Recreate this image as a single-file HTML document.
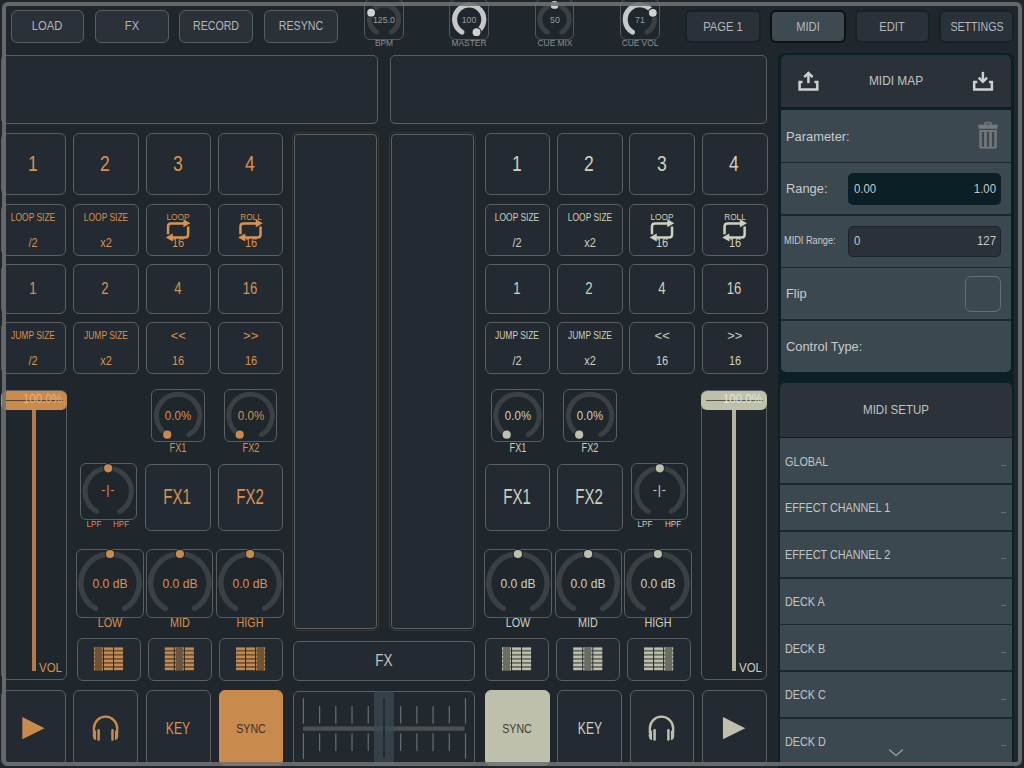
<!DOCTYPE html>
<html><head><meta charset="utf-8"><style>
html,body{margin:0;padding:0;}
body{width:1024px;height:768px;overflow:hidden;background:#1f262c;font-family:"Liberation Sans", sans-serif;position:relative;}
</style></head><body>
<div style="position:absolute;left:10.50px;top:10.20px;width:73.50px;height:32.50px;background:#2a3138;border:1.3px solid #5a5e62;border-radius:6px;box-sizing:border-box;"></div><div style="position:absolute;left:47.25px;top:26.40px;font-size:13.3px;line-height:13.3px;height:13.3px;color:#b5b7b8;white-space:nowrap;transform:translate(-50%,-50%) scaleX(0.84);transform-origin:center center;font-weight:normal;">LOAD</div><div style="position:absolute;left:95.00px;top:10.20px;width:73.50px;height:32.50px;background:#2a3138;border:1.3px solid #5a5e62;border-radius:6px;box-sizing:border-box;"></div><div style="position:absolute;left:131.75px;top:26.40px;font-size:13.3px;line-height:13.3px;height:13.3px;color:#b5b7b8;white-space:nowrap;transform:translate(-50%,-50%) scaleX(0.84);transform-origin:center center;font-weight:normal;">FX</div><div style="position:absolute;left:179.10px;top:10.20px;width:74.40px;height:32.50px;background:#2a3138;border:1.3px solid #5a5e62;border-radius:6px;box-sizing:border-box;"></div><div style="position:absolute;left:216.30px;top:26.40px;font-size:13.3px;line-height:13.3px;height:13.3px;color:#b5b7b8;white-space:nowrap;transform:translate(-50%,-50%) scaleX(0.8);transform-origin:center center;font-weight:normal;">RECORD</div><div style="position:absolute;left:263.50px;top:10.20px;width:74.40px;height:32.50px;background:#2a3138;border:1.3px solid #5a5e62;border-radius:6px;box-sizing:border-box;"></div><div style="position:absolute;left:300.70px;top:26.40px;font-size:13.3px;line-height:13.3px;height:13.3px;color:#b5b7b8;white-space:nowrap;transform:translate(-50%,-50%) scaleX(0.8);transform-origin:center center;font-weight:normal;">RESYNC</div><div style="position:absolute;left:685.30px;top:9.60px;width:75.90px;height:33.80px;background:#2a3138;border:2px solid #14232a;border-radius:6px;box-sizing:border-box;"></div><div style="position:absolute;left:723.25px;top:26.60px;font-size:13.3px;line-height:13.3px;height:13.3px;color:#b5b7b8;white-space:nowrap;transform:translate(-50%,-50%) scaleX(0.84);transform-origin:center center;font-weight:normal;">PAGE 1</div><div style="position:absolute;left:769.80px;top:9.60px;width:76.00px;height:33.80px;background:#3d4a52;border:2px solid #0b1114;border-radius:6px;box-sizing:border-box;"></div><div style="position:absolute;left:807.80px;top:26.60px;font-size:13.3px;line-height:13.3px;height:13.3px;color:#b5b7b8;white-space:nowrap;transform:translate(-50%,-50%) scaleX(0.84);transform-origin:center center;font-weight:normal;">MIDI</div><div style="position:absolute;left:854.50px;top:9.60px;width:75.20px;height:33.80px;background:#2a3138;border:2px solid #14232a;border-radius:6px;box-sizing:border-box;"></div><div style="position:absolute;left:892.10px;top:26.60px;font-size:13.3px;line-height:13.3px;height:13.3px;color:#b5b7b8;white-space:nowrap;transform:translate(-50%,-50%) scaleX(0.84);transform-origin:center center;font-weight:normal;">EDIT</div><div style="position:absolute;left:938.80px;top:9.60px;width:75.50px;height:33.80px;background:#2a3138;border:2px solid #14232a;border-radius:6px;box-sizing:border-box;"></div><div style="position:absolute;left:976.55px;top:26.60px;font-size:13.3px;line-height:13.3px;height:13.3px;color:#b5b7b8;white-space:nowrap;transform:translate(-50%,-50%) scaleX(0.8);transform-origin:center center;font-weight:normal;">SETTINGS</div><div style="position:absolute;left:364.20px;top:-1.00px;width:39.60px;height:40.60px;background:transparent;border:1.2px solid #55585b;border-radius:6px;box-sizing:border-box;"></div><div style="position:absolute;left:384.00px;top:19.50px;font-size:9.8px;line-height:9.8px;height:9.8px;color:#9a9c9d;white-space:nowrap;transform:translate(-50%,-50%) scaleX(0.9);transform-origin:center center;font-weight:normal;">125.0</div><div style="position:absolute;left:384.00px;top:42.70px;font-size:9px;line-height:9px;height:9px;color:#8c8f90;white-space:nowrap;transform:translate(-50%,-50%) scaleX(0.93);transform-origin:center center;font-weight:normal;">BPM</div><div style="position:absolute;left:449.40px;top:-1.00px;width:39.60px;height:40.60px;background:transparent;border:1.2px solid #55585b;border-radius:6px;box-sizing:border-box;"></div><div style="position:absolute;left:469.20px;top:19.50px;font-size:9.8px;line-height:9.8px;height:9.8px;color:#9a9c9d;white-space:nowrap;transform:translate(-50%,-50%) scaleX(0.9);transform-origin:center center;font-weight:normal;">100</div><div style="position:absolute;left:469.20px;top:42.70px;font-size:9px;line-height:9px;height:9px;color:#8c8f90;white-space:nowrap;transform:translate(-50%,-50%) scaleX(0.93);transform-origin:center center;font-weight:normal;">MASTER</div><div style="position:absolute;left:534.70px;top:-1.00px;width:39.60px;height:40.60px;background:transparent;border:1.2px solid #55585b;border-radius:6px;box-sizing:border-box;"></div><div style="position:absolute;left:554.50px;top:19.50px;font-size:9.8px;line-height:9.8px;height:9.8px;color:#9a9c9d;white-space:nowrap;transform:translate(-50%,-50%) scaleX(0.9);transform-origin:center center;font-weight:normal;">50</div><div style="position:absolute;left:554.50px;top:42.70px;font-size:9px;line-height:9px;height:9px;color:#8c8f90;white-space:nowrap;transform:translate(-50%,-50%) scaleX(0.93);transform-origin:center center;font-weight:normal;">CUE MIX</div><div style="position:absolute;left:620.00px;top:-1.00px;width:39.60px;height:40.60px;background:transparent;border:1.2px solid #55585b;border-radius:6px;box-sizing:border-box;"></div><div style="position:absolute;left:639.80px;top:19.50px;font-size:9.8px;line-height:9.8px;height:9.8px;color:#9a9c9d;white-space:nowrap;transform:translate(-50%,-50%) scaleX(0.9);transform-origin:center center;font-weight:normal;">71</div><div style="position:absolute;left:639.80px;top:42.70px;font-size:9px;line-height:9px;height:9px;color:#8c8f90;white-space:nowrap;transform:translate(-50%,-50%) scaleX(0.93);transform-origin:center center;font-weight:normal;">CUE VOL</div><div style="position:absolute;left:0.50px;top:54.50px;width:377.50px;height:69.30px;background:#232a31;border:1.5px solid #5c5f62;border-radius:5px;box-sizing:border-box;"></div><div style="position:absolute;left:390.20px;top:54.50px;width:377.10px;height:69.30px;background:#232a31;border:1.5px solid #5c5f62;border-radius:5px;box-sizing:border-box;"></div><div style="position:absolute;left:0.50px;top:133.30px;width:65.50px;height:62.10px;background:#232a31;border:1.5px solid #5c5f62;border-radius:6px;box-sizing:border-box;"></div><div style="position:absolute;left:32.75px;top:164.40px;font-size:22.5px;line-height:22.5px;height:22.5px;color:#d9924f;white-space:nowrap;transform:translate(-50%,-50%) scaleX(0.78);transform-origin:center center;font-weight:normal;">1</div><div style="position:absolute;left:0.50px;top:204.10px;width:65.50px;height:51.90px;background:#232a31;border:1.5px solid #5c5f62;border-radius:6px;box-sizing:border-box;"></div><div style="position:absolute;left:0.50px;top:263.80px;width:65.50px;height:50.50px;background:#232a31;border:1.5px solid #5c5f62;border-radius:6px;box-sizing:border-box;"></div><div style="position:absolute;left:32.65px;top:287.60px;font-size:16.4px;line-height:16.4px;height:16.4px;color:#d9924f;white-space:nowrap;transform:translate(-50%,-50%) scaleX(0.8);transform-origin:center center;font-weight:normal;">1</div><div style="position:absolute;left:0.50px;top:322.10px;width:65.50px;height:51.70px;background:#232a31;border:1.5px solid #5c5f62;border-radius:6px;box-sizing:border-box;"></div><div style="position:absolute;left:33.25px;top:217.00px;font-size:10.8px;line-height:10.8px;height:10.8px;color:#d9924f;white-space:nowrap;transform:translate(-50%,-50%) scaleX(0.78);transform-origin:center center;font-weight:normal;">LOOP SIZE</div><div style="position:absolute;left:33.25px;top:242.60px;font-size:12.5px;line-height:12.5px;height:12.5px;color:#d9924f;white-space:nowrap;transform:translate(-50%,-50%) scaleX(0.88);transform-origin:center center;font-weight:normal;">/2</div><div style="position:absolute;left:33.25px;top:335.20px;font-size:10.8px;line-height:10.8px;height:10.8px;color:#d9924f;white-space:nowrap;transform:translate(-50%,-50%) scaleX(0.78);transform-origin:center center;font-weight:normal;">JUMP SIZE</div><div style="position:absolute;left:33.25px;top:360.50px;font-size:12.5px;line-height:12.5px;height:12.5px;color:#d9924f;white-space:nowrap;transform:translate(-50%,-50%) scaleX(0.88);transform-origin:center center;font-weight:normal;">/2</div><div style="position:absolute;left:73.00px;top:133.30px;width:65.60px;height:62.10px;background:#232a31;border:1.5px solid #5c5f62;border-radius:6px;box-sizing:border-box;"></div><div style="position:absolute;left:105.30px;top:164.40px;font-size:22.5px;line-height:22.5px;height:22.5px;color:#d9924f;white-space:nowrap;transform:translate(-50%,-50%) scaleX(0.78);transform-origin:center center;font-weight:normal;">2</div><div style="position:absolute;left:73.00px;top:204.10px;width:65.60px;height:51.90px;background:#232a31;border:1.5px solid #5c5f62;border-radius:6px;box-sizing:border-box;"></div><div style="position:absolute;left:73.00px;top:263.80px;width:65.60px;height:50.50px;background:#232a31;border:1.5px solid #5c5f62;border-radius:6px;box-sizing:border-box;"></div><div style="position:absolute;left:105.20px;top:287.60px;font-size:16.4px;line-height:16.4px;height:16.4px;color:#d9924f;white-space:nowrap;transform:translate(-50%,-50%) scaleX(0.8);transform-origin:center center;font-weight:normal;">2</div><div style="position:absolute;left:73.00px;top:322.10px;width:65.60px;height:51.70px;background:#232a31;border:1.5px solid #5c5f62;border-radius:6px;box-sizing:border-box;"></div><div style="position:absolute;left:105.80px;top:217.00px;font-size:10.8px;line-height:10.8px;height:10.8px;color:#d9924f;white-space:nowrap;transform:translate(-50%,-50%) scaleX(0.78);transform-origin:center center;font-weight:normal;">LOOP SIZE</div><div style="position:absolute;left:105.80px;top:242.60px;font-size:12.5px;line-height:12.5px;height:12.5px;color:#d9924f;white-space:nowrap;transform:translate(-50%,-50%) scaleX(0.88);transform-origin:center center;font-weight:normal;">x2</div><div style="position:absolute;left:105.80px;top:335.20px;font-size:10.8px;line-height:10.8px;height:10.8px;color:#d9924f;white-space:nowrap;transform:translate(-50%,-50%) scaleX(0.78);transform-origin:center center;font-weight:normal;">JUMP SIZE</div><div style="position:absolute;left:105.80px;top:360.50px;font-size:12.5px;line-height:12.5px;height:12.5px;color:#d9924f;white-space:nowrap;transform:translate(-50%,-50%) scaleX(0.88);transform-origin:center center;font-weight:normal;">x2</div><div style="position:absolute;left:145.50px;top:133.30px;width:65.50px;height:62.10px;background:#232a31;border:1.5px solid #5c5f62;border-radius:6px;box-sizing:border-box;"></div><div style="position:absolute;left:177.75px;top:164.40px;font-size:22.5px;line-height:22.5px;height:22.5px;color:#d9924f;white-space:nowrap;transform:translate(-50%,-50%) scaleX(0.78);transform-origin:center center;font-weight:normal;">3</div><div style="position:absolute;left:145.50px;top:204.10px;width:65.50px;height:51.90px;background:#232a31;border:1.5px solid #5c5f62;border-radius:6px;box-sizing:border-box;"></div><div style="position:absolute;left:145.50px;top:263.80px;width:65.50px;height:50.50px;background:#232a31;border:1.5px solid #5c5f62;border-radius:6px;box-sizing:border-box;"></div><div style="position:absolute;left:177.65px;top:287.60px;font-size:16.4px;line-height:16.4px;height:16.4px;color:#d9924f;white-space:nowrap;transform:translate(-50%,-50%) scaleX(0.8);transform-origin:center center;font-weight:normal;">4</div><div style="position:absolute;left:145.50px;top:322.10px;width:65.50px;height:51.70px;background:#232a31;border:1.5px solid #5c5f62;border-radius:6px;box-sizing:border-box;"></div><div style="position:absolute;left:178.25px;top:217.20px;font-size:9.5px;line-height:9.5px;height:9.5px;color:#d9924f;white-space:nowrap;transform:translate(-50%,-50%) scaleX(0.87);transform-origin:center center;font-weight:normal;">LOOP</div><div style="position:absolute;left:178.25px;top:242.60px;font-size:12.5px;line-height:12.5px;height:12.5px;color:#d9924f;white-space:nowrap;transform:translate(-50%,-50%) scaleX(0.88);transform-origin:center center;font-weight:normal;">16</div><div style="position:absolute;left:178.25px;top:335.40px;font-size:13px;line-height:13px;height:13px;color:#d9924f;white-space:nowrap;transform:translate(-50%,-50%) scaleX(1.0);transform-origin:center center;font-weight:normal;">&lt;&lt;</div><div style="position:absolute;left:178.25px;top:360.50px;font-size:12.5px;line-height:12.5px;height:12.5px;color:#d9924f;white-space:nowrap;transform:translate(-50%,-50%) scaleX(0.88);transform-origin:center center;font-weight:normal;">16</div><div style="position:absolute;left:218.10px;top:133.30px;width:65.10px;height:62.10px;background:#232a31;border:1.5px solid #5c5f62;border-radius:6px;box-sizing:border-box;"></div><div style="position:absolute;left:250.15px;top:164.40px;font-size:22.5px;line-height:22.5px;height:22.5px;color:#d9924f;white-space:nowrap;transform:translate(-50%,-50%) scaleX(0.78);transform-origin:center center;font-weight:normal;">4</div><div style="position:absolute;left:218.10px;top:204.10px;width:65.10px;height:51.90px;background:#232a31;border:1.5px solid #5c5f62;border-radius:6px;box-sizing:border-box;"></div><div style="position:absolute;left:218.10px;top:263.80px;width:65.10px;height:50.50px;background:#232a31;border:1.5px solid #5c5f62;border-radius:6px;box-sizing:border-box;"></div><div style="position:absolute;left:250.05px;top:287.60px;font-size:16.4px;line-height:16.4px;height:16.4px;color:#d9924f;white-space:nowrap;transform:translate(-50%,-50%) scaleX(0.8);transform-origin:center center;font-weight:normal;">16</div><div style="position:absolute;left:218.10px;top:322.10px;width:65.10px;height:51.70px;background:#232a31;border:1.5px solid #5c5f62;border-radius:6px;box-sizing:border-box;"></div><div style="position:absolute;left:250.65px;top:217.20px;font-size:9.5px;line-height:9.5px;height:9.5px;color:#d9924f;white-space:nowrap;transform:translate(-50%,-50%) scaleX(0.87);transform-origin:center center;font-weight:normal;">ROLL</div><div style="position:absolute;left:250.65px;top:242.60px;font-size:12.5px;line-height:12.5px;height:12.5px;color:#d9924f;white-space:nowrap;transform:translate(-50%,-50%) scaleX(0.88);transform-origin:center center;font-weight:normal;">16</div><div style="position:absolute;left:250.65px;top:335.40px;font-size:13px;line-height:13px;height:13px;color:#d9924f;white-space:nowrap;transform:translate(-50%,-50%) scaleX(1.0);transform-origin:center center;font-weight:normal;">&gt;&gt;</div><div style="position:absolute;left:250.65px;top:360.50px;font-size:12.5px;line-height:12.5px;height:12.5px;color:#d9924f;white-space:nowrap;transform:translate(-50%,-50%) scaleX(0.88);transform-origin:center center;font-weight:normal;">16</div><div style="position:absolute;left:484.80px;top:133.30px;width:65.10px;height:62.10px;background:#232a31;border:1.5px solid #5c5f62;border-radius:6px;box-sizing:border-box;"></div><div style="position:absolute;left:516.85px;top:164.40px;font-size:22.5px;line-height:22.5px;height:22.5px;color:#cfd0be;white-space:nowrap;transform:translate(-50%,-50%) scaleX(0.78);transform-origin:center center;font-weight:normal;">1</div><div style="position:absolute;left:484.80px;top:204.10px;width:65.10px;height:51.90px;background:#232a31;border:1.5px solid #5c5f62;border-radius:6px;box-sizing:border-box;"></div><div style="position:absolute;left:484.80px;top:263.80px;width:65.10px;height:50.50px;background:#232a31;border:1.5px solid #5c5f62;border-radius:6px;box-sizing:border-box;"></div><div style="position:absolute;left:516.75px;top:287.60px;font-size:16.4px;line-height:16.4px;height:16.4px;color:#cfd0be;white-space:nowrap;transform:translate(-50%,-50%) scaleX(0.8);transform-origin:center center;font-weight:normal;">1</div><div style="position:absolute;left:484.80px;top:322.10px;width:65.10px;height:51.70px;background:#232a31;border:1.5px solid #5c5f62;border-radius:6px;box-sizing:border-box;"></div><div style="position:absolute;left:517.35px;top:217.00px;font-size:10.8px;line-height:10.8px;height:10.8px;color:#cfd0be;white-space:nowrap;transform:translate(-50%,-50%) scaleX(0.78);transform-origin:center center;font-weight:normal;">LOOP SIZE</div><div style="position:absolute;left:517.35px;top:242.60px;font-size:12.5px;line-height:12.5px;height:12.5px;color:#cfd0be;white-space:nowrap;transform:translate(-50%,-50%) scaleX(0.88);transform-origin:center center;font-weight:normal;">/2</div><div style="position:absolute;left:517.35px;top:335.20px;font-size:10.8px;line-height:10.8px;height:10.8px;color:#cfd0be;white-space:nowrap;transform:translate(-50%,-50%) scaleX(0.78);transform-origin:center center;font-weight:normal;">JUMP SIZE</div><div style="position:absolute;left:517.35px;top:360.50px;font-size:12.5px;line-height:12.5px;height:12.5px;color:#cfd0be;white-space:nowrap;transform:translate(-50%,-50%) scaleX(0.88);transform-origin:center center;font-weight:normal;">/2</div><div style="position:absolute;left:557.00px;top:133.30px;width:65.50px;height:62.10px;background:#232a31;border:1.5px solid #5c5f62;border-radius:6px;box-sizing:border-box;"></div><div style="position:absolute;left:589.25px;top:164.40px;font-size:22.5px;line-height:22.5px;height:22.5px;color:#cfd0be;white-space:nowrap;transform:translate(-50%,-50%) scaleX(0.78);transform-origin:center center;font-weight:normal;">2</div><div style="position:absolute;left:557.00px;top:204.10px;width:65.50px;height:51.90px;background:#232a31;border:1.5px solid #5c5f62;border-radius:6px;box-sizing:border-box;"></div><div style="position:absolute;left:557.00px;top:263.80px;width:65.50px;height:50.50px;background:#232a31;border:1.5px solid #5c5f62;border-radius:6px;box-sizing:border-box;"></div><div style="position:absolute;left:589.15px;top:287.60px;font-size:16.4px;line-height:16.4px;height:16.4px;color:#cfd0be;white-space:nowrap;transform:translate(-50%,-50%) scaleX(0.8);transform-origin:center center;font-weight:normal;">2</div><div style="position:absolute;left:557.00px;top:322.10px;width:65.50px;height:51.70px;background:#232a31;border:1.5px solid #5c5f62;border-radius:6px;box-sizing:border-box;"></div><div style="position:absolute;left:589.75px;top:217.00px;font-size:10.8px;line-height:10.8px;height:10.8px;color:#cfd0be;white-space:nowrap;transform:translate(-50%,-50%) scaleX(0.78);transform-origin:center center;font-weight:normal;">LOOP SIZE</div><div style="position:absolute;left:589.75px;top:242.60px;font-size:12.5px;line-height:12.5px;height:12.5px;color:#cfd0be;white-space:nowrap;transform:translate(-50%,-50%) scaleX(0.88);transform-origin:center center;font-weight:normal;">x2</div><div style="position:absolute;left:589.75px;top:335.20px;font-size:10.8px;line-height:10.8px;height:10.8px;color:#cfd0be;white-space:nowrap;transform:translate(-50%,-50%) scaleX(0.78);transform-origin:center center;font-weight:normal;">JUMP SIZE</div><div style="position:absolute;left:589.75px;top:360.50px;font-size:12.5px;line-height:12.5px;height:12.5px;color:#cfd0be;white-space:nowrap;transform:translate(-50%,-50%) scaleX(0.88);transform-origin:center center;font-weight:normal;">x2</div><div style="position:absolute;left:629.40px;top:133.30px;width:65.50px;height:62.10px;background:#232a31;border:1.5px solid #5c5f62;border-radius:6px;box-sizing:border-box;"></div><div style="position:absolute;left:661.65px;top:164.40px;font-size:22.5px;line-height:22.5px;height:22.5px;color:#cfd0be;white-space:nowrap;transform:translate(-50%,-50%) scaleX(0.78);transform-origin:center center;font-weight:normal;">3</div><div style="position:absolute;left:629.40px;top:204.10px;width:65.50px;height:51.90px;background:#232a31;border:1.5px solid #5c5f62;border-radius:6px;box-sizing:border-box;"></div><div style="position:absolute;left:629.40px;top:263.80px;width:65.50px;height:50.50px;background:#232a31;border:1.5px solid #5c5f62;border-radius:6px;box-sizing:border-box;"></div><div style="position:absolute;left:661.55px;top:287.60px;font-size:16.4px;line-height:16.4px;height:16.4px;color:#cfd0be;white-space:nowrap;transform:translate(-50%,-50%) scaleX(0.8);transform-origin:center center;font-weight:normal;">4</div><div style="position:absolute;left:629.40px;top:322.10px;width:65.50px;height:51.70px;background:#232a31;border:1.5px solid #5c5f62;border-radius:6px;box-sizing:border-box;"></div><div style="position:absolute;left:662.15px;top:217.20px;font-size:9.5px;line-height:9.5px;height:9.5px;color:#cfd0be;white-space:nowrap;transform:translate(-50%,-50%) scaleX(0.87);transform-origin:center center;font-weight:normal;">LOOP</div><div style="position:absolute;left:662.15px;top:242.60px;font-size:12.5px;line-height:12.5px;height:12.5px;color:#cfd0be;white-space:nowrap;transform:translate(-50%,-50%) scaleX(0.88);transform-origin:center center;font-weight:normal;">16</div><div style="position:absolute;left:662.15px;top:335.40px;font-size:13px;line-height:13px;height:13px;color:#cfd0be;white-space:nowrap;transform:translate(-50%,-50%) scaleX(1.0);transform-origin:center center;font-weight:normal;">&lt;&lt;</div><div style="position:absolute;left:662.15px;top:360.50px;font-size:12.5px;line-height:12.5px;height:12.5px;color:#cfd0be;white-space:nowrap;transform:translate(-50%,-50%) scaleX(0.88);transform-origin:center center;font-weight:normal;">16</div><div style="position:absolute;left:702.00px;top:133.30px;width:65.50px;height:62.10px;background:#232a31;border:1.5px solid #5c5f62;border-radius:6px;box-sizing:border-box;"></div><div style="position:absolute;left:734.25px;top:164.40px;font-size:22.5px;line-height:22.5px;height:22.5px;color:#cfd0be;white-space:nowrap;transform:translate(-50%,-50%) scaleX(0.78);transform-origin:center center;font-weight:normal;">4</div><div style="position:absolute;left:702.00px;top:204.10px;width:65.50px;height:51.90px;background:#232a31;border:1.5px solid #5c5f62;border-radius:6px;box-sizing:border-box;"></div><div style="position:absolute;left:702.00px;top:263.80px;width:65.50px;height:50.50px;background:#232a31;border:1.5px solid #5c5f62;border-radius:6px;box-sizing:border-box;"></div><div style="position:absolute;left:734.15px;top:287.60px;font-size:16.4px;line-height:16.4px;height:16.4px;color:#cfd0be;white-space:nowrap;transform:translate(-50%,-50%) scaleX(0.8);transform-origin:center center;font-weight:normal;">16</div><div style="position:absolute;left:702.00px;top:322.10px;width:65.50px;height:51.70px;background:#232a31;border:1.5px solid #5c5f62;border-radius:6px;box-sizing:border-box;"></div><div style="position:absolute;left:734.75px;top:217.20px;font-size:9.5px;line-height:9.5px;height:9.5px;color:#cfd0be;white-space:nowrap;transform:translate(-50%,-50%) scaleX(0.87);transform-origin:center center;font-weight:normal;">ROLL</div><div style="position:absolute;left:734.75px;top:242.60px;font-size:12.5px;line-height:12.5px;height:12.5px;color:#cfd0be;white-space:nowrap;transform:translate(-50%,-50%) scaleX(0.88);transform-origin:center center;font-weight:normal;">16</div><div style="position:absolute;left:734.75px;top:335.40px;font-size:13px;line-height:13px;height:13px;color:#cfd0be;white-space:nowrap;transform:translate(-50%,-50%) scaleX(1.0);transform-origin:center center;font-weight:normal;">&gt;&gt;</div><div style="position:absolute;left:734.75px;top:360.50px;font-size:12.5px;line-height:12.5px;height:12.5px;color:#cfd0be;white-space:nowrap;transform:translate(-50%,-50%) scaleX(0.88);transform-origin:center center;font-weight:normal;">16</div><div style="position:absolute;left:292.00px;top:132.00px;width:87.00px;height:499.00px;background:transparent;border:1.6px solid #3a342e;border-radius:5px;box-sizing:border-box;"></div><div style="position:absolute;left:293.60px;top:133.60px;width:83.80px;height:495.80px;background:#232a31;border:1.4px solid #5c5f62;border-radius:4px;box-sizing:border-box;"></div><div style="position:absolute;left:389.00px;top:132.00px;width:87.00px;height:499.00px;background:transparent;border:1.6px solid #33373a;border-radius:5px;box-sizing:border-box;"></div><div style="position:absolute;left:390.60px;top:133.60px;width:83.80px;height:495.80px;background:#232a31;border:1.4px solid #5c5f62;border-radius:4px;box-sizing:border-box;"></div><div style="position:absolute;left:293.00px;top:640.50px;width:181.70px;height:40.50px;background:#232a31;border:1.3px solid #5c5f62;border-radius:6px;box-sizing:border-box;"></div><div style="position:absolute;left:384.00px;top:660.40px;font-size:16.5px;line-height:16.5px;height:16.5px;color:#c4c6c6;white-space:nowrap;transform:translate(-50%,-50%) scaleX(0.82);transform-origin:center center;font-weight:normal;">FX</div><div style="position:absolute;left:293.00px;top:690.90px;width:181.70px;height:75.30px;background:#21282e;border:1.5px solid #5c5f62;border-radius:6px;box-sizing:border-box;"></div><div style="position:absolute;left:1.00px;top:390.00px;width:65.60px;height:290.00px;background:transparent;border:1.2px solid #5c5f62;border-radius:6px;box-sizing:border-box;"></div><div style="position:absolute;left:31.80px;top:409px;width:4px;height:262px;background:#b57a47;"></div><div style="position:absolute;left:1.00px;top:390.6px;width:65.60px;height:19.1px;background:#c98a4e;border-radius:6px;"></div><div style="position:absolute;left:5.80px;top:399.8px;width:57.60px;height:1.3px;background:#5a4230;"></div><div style="position:absolute;left:61.60px;top:399.00px;font-size:12px;line-height:12px;height:12px;color:#e8b07a;white-space:nowrap;transform:translate(-100%,-50%) scaleX(0.96);transform-origin:right center;font-weight:normal;">100.0%</div><div style="position:absolute;left:62.10px;top:667.70px;font-size:12.5px;line-height:12.5px;height:12.5px;color:#d9924f;white-space:nowrap;transform:translate(-100%,-50%) scaleX(0.92);transform-origin:right center;font-weight:normal;">VOL</div><div style="position:absolute;left:151.30px;top:389.00px;width:53.60px;height:53.30px;background:transparent;border:1.1px solid #5c5f62;border-radius:6px;box-sizing:border-box;"></div><div style="position:absolute;left:178.10px;top:415.60px;font-size:12.8px;line-height:12.8px;height:12.8px;color:#d9924f;white-space:nowrap;transform:translate(-50%,-50%) scaleX(0.9);transform-origin:center center;font-weight:normal;">0.0%</div><div style="position:absolute;left:178.10px;top:447.90px;font-size:12.4px;line-height:12.4px;height:12.4px;color:#d9924f;white-space:nowrap;transform:translate(-50%,-50%) scaleX(0.74);transform-origin:center center;font-weight:normal;">FX1</div><div style="position:absolute;left:223.70px;top:389.00px;width:53.60px;height:53.30px;background:transparent;border:1.1px solid #5c5f62;border-radius:6px;box-sizing:border-box;"></div><div style="position:absolute;left:250.50px;top:415.60px;font-size:12.8px;line-height:12.8px;height:12.8px;color:#d9924f;white-space:nowrap;transform:translate(-50%,-50%) scaleX(0.9);transform-origin:center center;font-weight:normal;">0.0%</div><div style="position:absolute;left:250.50px;top:447.90px;font-size:12.4px;line-height:12.4px;height:12.4px;color:#d9924f;white-space:nowrap;transform:translate(-50%,-50%) scaleX(0.74);transform-origin:center center;font-weight:normal;">FX2</div><div style="position:absolute;left:79.70px;top:463.30px;width:57.00px;height:56.70px;background:transparent;border:1.2px solid #5c5f62;border-radius:6px;box-sizing:border-box;"></div><div style="position:absolute;left:108.20px;top:490.40px;font-size:12.5px;line-height:12.5px;height:12.5px;color:#d9924f;white-space:nowrap;transform:translate(-50%,-50%) scaleX(1.0);transform-origin:center center;font-weight:normal;letter-spacing:0.8px">-|-</div><div style="position:absolute;left:93.60px;top:523.70px;font-size:9.5px;line-height:9.5px;height:9.5px;color:#d9924f;white-space:nowrap;transform:translate(-50%,-50%) scaleX(0.85);transform-origin:center center;font-weight:normal;">LPF</div><div style="position:absolute;left:121.00px;top:523.70px;font-size:9.5px;line-height:9.5px;height:9.5px;color:#d9924f;white-space:nowrap;transform:translate(-50%,-50%) scaleX(0.85);transform-origin:center center;font-weight:normal;">HPF</div><div style="position:absolute;left:145.20px;top:464.00px;width:65.50px;height:66.60px;background:#232a31;border:1.5px solid #5c5f62;border-radius:6px;box-sizing:border-box;"></div><div style="position:absolute;left:177.15px;top:497.90px;font-size:21.5px;line-height:21.5px;height:21.5px;color:#d9924f;white-space:nowrap;transform:translate(-50%,-50%) scaleX(0.7);transform-origin:center center;font-weight:normal;">FX1</div><div style="position:absolute;left:217.80px;top:464.00px;width:65.30px;height:66.60px;background:#232a31;border:1.5px solid #5c5f62;border-radius:6px;box-sizing:border-box;"></div><div style="position:absolute;left:249.65px;top:497.90px;font-size:21.5px;line-height:21.5px;height:21.5px;color:#d9924f;white-space:nowrap;transform:translate(-50%,-50%) scaleX(0.7);transform-origin:center center;font-weight:normal;">FX2</div><div style="position:absolute;left:76.00px;top:549.00px;width:68.10px;height:69.00px;background:transparent;border:1.2px solid #5c5f62;border-radius:6px;box-sizing:border-box;"></div><div style="position:absolute;left:110.05px;top:583.00px;font-size:13px;line-height:13px;height:13px;color:#d9924f;white-space:nowrap;transform:translate(-50%,-50%) scaleX(0.93);transform-origin:center center;font-weight:normal;">0.0 dB</div><div style="position:absolute;left:110.05px;top:622.70px;font-size:12px;line-height:12px;height:12px;color:#d9924f;white-space:nowrap;transform:translate(-50%,-50%) scaleX(0.9);transform-origin:center center;font-weight:normal;">LOW</div><div style="position:absolute;left:146.30px;top:549.00px;width:67.20px;height:69.00px;background:transparent;border:1.2px solid #5c5f62;border-radius:6px;box-sizing:border-box;"></div><div style="position:absolute;left:179.90px;top:583.00px;font-size:13px;line-height:13px;height:13px;color:#d9924f;white-space:nowrap;transform:translate(-50%,-50%) scaleX(0.93);transform-origin:center center;font-weight:normal;">0.0 dB</div><div style="position:absolute;left:179.90px;top:622.70px;font-size:12px;line-height:12px;height:12px;color:#d9924f;white-space:nowrap;transform:translate(-50%,-50%) scaleX(0.9);transform-origin:center center;font-weight:normal;">MID</div><div style="position:absolute;left:216.00px;top:549.00px;width:68.20px;height:69.00px;background:transparent;border:1.2px solid #5c5f62;border-radius:6px;box-sizing:border-box;"></div><div style="position:absolute;left:250.10px;top:583.00px;font-size:13px;line-height:13px;height:13px;color:#d9924f;white-space:nowrap;transform:translate(-50%,-50%) scaleX(0.93);transform-origin:center center;font-weight:normal;">0.0 dB</div><div style="position:absolute;left:250.10px;top:622.70px;font-size:12px;line-height:12px;height:12px;color:#d9924f;white-space:nowrap;transform:translate(-50%,-50%) scaleX(0.9);transform-origin:center center;font-weight:normal;">HIGH</div><div style="position:absolute;left:77.00px;top:637.70px;width:63.90px;height:43.00px;background:#232a31;border:1.5px solid #5c5f62;border-radius:6px;box-sizing:border-box;"></div><div style="position:absolute;left:147.80px;top:637.70px;width:64.00px;height:43.00px;background:#232a31;border:1.5px solid #5c5f62;border-radius:6px;box-sizing:border-box;"></div><div style="position:absolute;left:218.90px;top:637.70px;width:64.20px;height:43.00px;background:#232a31;border:1.5px solid #5c5f62;border-radius:6px;box-sizing:border-box;"></div><div style="position:absolute;left:1.00px;top:690.30px;width:65.00px;height:75.90px;background:#232a31;border:1.5px solid #5c5f62;border-radius:6px;box-sizing:border-box;"></div><div style="position:absolute;left:73.30px;top:690.30px;width:65.10px;height:75.90px;background:#232a31;border:1.5px solid #5c5f62;border-radius:6px;box-sizing:border-box;"></div><div style="position:absolute;left:145.80px;top:690.30px;width:65.00px;height:75.90px;background:#232a31;border:1.5px solid #5c5f62;border-radius:6px;box-sizing:border-box;"></div><div style="position:absolute;left:178.30px;top:729.20px;font-size:16px;line-height:16px;height:16px;color:#d9924f;white-space:nowrap;transform:translate(-50%,-50%) scaleX(0.76);transform-origin:center center;font-weight:normal;">KEY</div><div style="position:absolute;left:218.50px;top:690.30px;width:64.20px;height:75.90px;background:#c98a4e;border:1.2px solid #c98a4e;border-radius:6px;box-sizing:border-box;"></div><div style="position:absolute;left:250.60px;top:728.00px;font-size:13px;line-height:13px;height:13px;color:#3b3026;white-space:nowrap;transform:translate(-50%,-50%) scaleX(0.82);transform-origin:center center;font-weight:normal;">SYNC</div><div style="position:absolute;left:701.00px;top:390.00px;width:65.60px;height:290.00px;background:transparent;border:1.2px solid #5c5f62;border-radius:6px;box-sizing:border-box;"></div><div style="position:absolute;left:731.80px;top:409px;width:4px;height:262px;background:#b3b4a0;"></div><div style="position:absolute;left:701.00px;top:390.6px;width:65.60px;height:19.1px;background:#bfc0ac;border-radius:6px;"></div><div style="position:absolute;left:705.80px;top:399.8px;width:57.60px;height:1.3px;background:#55554c;"></div><div style="position:absolute;left:761.60px;top:399.00px;font-size:12px;line-height:12px;height:12px;color:#e2e3d6;white-space:nowrap;transform:translate(-100%,-50%) scaleX(0.96);transform-origin:right center;font-weight:normal;">100.0%</div><div style="position:absolute;left:762.10px;top:667.70px;font-size:12.5px;line-height:12.5px;height:12.5px;color:#cfd0be;white-space:nowrap;transform:translate(-100%,-50%) scaleX(0.92);transform-origin:right center;font-weight:normal;">VOL</div><div style="position:absolute;left:490.70px;top:389.00px;width:53.60px;height:53.30px;background:transparent;border:1.1px solid #5c5f62;border-radius:6px;box-sizing:border-box;"></div><div style="position:absolute;left:517.50px;top:415.60px;font-size:12.8px;line-height:12.8px;height:12.8px;color:#cfd0be;white-space:nowrap;transform:translate(-50%,-50%) scaleX(0.9);transform-origin:center center;font-weight:normal;">0.0%</div><div style="position:absolute;left:517.50px;top:447.90px;font-size:12.4px;line-height:12.4px;height:12.4px;color:#cfd0be;white-space:nowrap;transform:translate(-50%,-50%) scaleX(0.74);transform-origin:center center;font-weight:normal;">FX1</div><div style="position:absolute;left:563.20px;top:389.00px;width:53.60px;height:53.30px;background:transparent;border:1.1px solid #5c5f62;border-radius:6px;box-sizing:border-box;"></div><div style="position:absolute;left:590.00px;top:415.60px;font-size:12.8px;line-height:12.8px;height:12.8px;color:#cfd0be;white-space:nowrap;transform:translate(-50%,-50%) scaleX(0.9);transform-origin:center center;font-weight:normal;">0.0%</div><div style="position:absolute;left:590.00px;top:447.90px;font-size:12.4px;line-height:12.4px;height:12.4px;color:#cfd0be;white-space:nowrap;transform:translate(-50%,-50%) scaleX(0.74);transform-origin:center center;font-weight:normal;">FX2</div><div style="position:absolute;left:631.30px;top:463.30px;width:57.00px;height:56.70px;background:transparent;border:1.2px solid #5c5f62;border-radius:6px;box-sizing:border-box;"></div><div style="position:absolute;left:659.80px;top:490.40px;font-size:12.5px;line-height:12.5px;height:12.5px;color:#cfd0be;white-space:nowrap;transform:translate(-50%,-50%) scaleX(1.0);transform-origin:center center;font-weight:normal;letter-spacing:0.8px">-|-</div><div style="position:absolute;left:645.20px;top:523.70px;font-size:9.5px;line-height:9.5px;height:9.5px;color:#cfd0be;white-space:nowrap;transform:translate(-50%,-50%) scaleX(0.85);transform-origin:center center;font-weight:normal;">LPF</div><div style="position:absolute;left:672.60px;top:523.70px;font-size:9.5px;line-height:9.5px;height:9.5px;color:#cfd0be;white-space:nowrap;transform:translate(-50%,-50%) scaleX(0.85);transform-origin:center center;font-weight:normal;">HPF</div><div style="position:absolute;left:485.00px;top:464.00px;width:65.30px;height:66.60px;background:#232a31;border:1.5px solid #5c5f62;border-radius:6px;box-sizing:border-box;"></div><div style="position:absolute;left:516.85px;top:497.90px;font-size:21.5px;line-height:21.5px;height:21.5px;color:#cfd0be;white-space:nowrap;transform:translate(-50%,-50%) scaleX(0.7);transform-origin:center center;font-weight:normal;">FX1</div><div style="position:absolute;left:557.30px;top:464.00px;width:65.50px;height:66.60px;background:#232a31;border:1.5px solid #5c5f62;border-radius:6px;box-sizing:border-box;"></div><div style="position:absolute;left:589.25px;top:497.90px;font-size:21.5px;line-height:21.5px;height:21.5px;color:#cfd0be;white-space:nowrap;transform:translate(-50%,-50%) scaleX(0.7);transform-origin:center center;font-weight:normal;">FX2</div><div style="position:absolute;left:483.80px;top:549.00px;width:68.20px;height:69.00px;background:transparent;border:1.2px solid #5c5f62;border-radius:6px;box-sizing:border-box;"></div><div style="position:absolute;left:517.90px;top:583.00px;font-size:13px;line-height:13px;height:13px;color:#cfd0be;white-space:nowrap;transform:translate(-50%,-50%) scaleX(0.93);transform-origin:center center;font-weight:normal;">0.0 dB</div><div style="position:absolute;left:517.90px;top:622.70px;font-size:12px;line-height:12px;height:12px;color:#cfd0be;white-space:nowrap;transform:translate(-50%,-50%) scaleX(0.9);transform-origin:center center;font-weight:normal;">LOW</div><div style="position:absolute;left:554.50px;top:549.00px;width:67.20px;height:69.00px;background:transparent;border:1.2px solid #5c5f62;border-radius:6px;box-sizing:border-box;"></div><div style="position:absolute;left:588.10px;top:583.00px;font-size:13px;line-height:13px;height:13px;color:#cfd0be;white-space:nowrap;transform:translate(-50%,-50%) scaleX(0.93);transform-origin:center center;font-weight:normal;">0.0 dB</div><div style="position:absolute;left:588.10px;top:622.70px;font-size:12px;line-height:12px;height:12px;color:#cfd0be;white-space:nowrap;transform:translate(-50%,-50%) scaleX(0.9);transform-origin:center center;font-weight:normal;">MID</div><div style="position:absolute;left:623.80px;top:549.00px;width:68.20px;height:69.00px;background:transparent;border:1.2px solid #5c5f62;border-radius:6px;box-sizing:border-box;"></div><div style="position:absolute;left:657.90px;top:583.00px;font-size:13px;line-height:13px;height:13px;color:#cfd0be;white-space:nowrap;transform:translate(-50%,-50%) scaleX(0.93);transform-origin:center center;font-weight:normal;">0.0 dB</div><div style="position:absolute;left:657.90px;top:622.70px;font-size:12px;line-height:12px;height:12px;color:#cfd0be;white-space:nowrap;transform:translate(-50%,-50%) scaleX(0.9);transform-origin:center center;font-weight:normal;">HIGH</div><div style="position:absolute;left:484.90px;top:637.70px;width:64.20px;height:43.00px;background:#232a31;border:1.5px solid #5c5f62;border-radius:6px;box-sizing:border-box;"></div><div style="position:absolute;left:556.20px;top:637.70px;width:64.00px;height:43.00px;background:#232a31;border:1.5px solid #5c5f62;border-radius:6px;box-sizing:border-box;"></div><div style="position:absolute;left:627.10px;top:637.70px;width:63.90px;height:43.00px;background:#232a31;border:1.5px solid #5c5f62;border-radius:6px;box-sizing:border-box;"></div><div style="position:absolute;left:485.10px;top:690.30px;width:64.50px;height:75.90px;background:#bfc0ac;border:1.2px solid #bfc0ac;border-radius:6px;box-sizing:border-box;"></div><div style="position:absolute;left:517.35px;top:728.00px;font-size:13px;line-height:13px;height:13px;color:#3c3d36;white-space:nowrap;transform:translate(-50%,-50%) scaleX(0.82);transform-origin:center center;font-weight:normal;">SYNC</div><div style="position:absolute;left:557.20px;top:690.30px;width:64.80px;height:75.90px;background:#232a31;border:1.5px solid #5c5f62;border-radius:6px;box-sizing:border-box;"></div><div style="position:absolute;left:589.60px;top:729.20px;font-size:16px;line-height:16px;height:16px;color:#cfd0be;white-space:nowrap;transform:translate(-50%,-50%) scaleX(0.76);transform-origin:center center;font-weight:normal;">KEY</div><div style="position:absolute;left:629.60px;top:690.30px;width:64.40px;height:75.90px;background:#232a31;border:1.5px solid #5c5f62;border-radius:6px;box-sizing:border-box;"></div><div style="position:absolute;left:701.60px;top:690.30px;width:65.10px;height:75.90px;background:#232a31;border:1.5px solid #5c5f62;border-radius:6px;box-sizing:border-box;"></div><div style="position:absolute;left:778px;top:53px;width:236px;height:321.5px;background:#0b1f26;border-radius:6px;"></div><div style="position:absolute;left:780.5px;top:55px;width:230.8px;height:52.3px;background:#2a3138;border-radius:5px 5px 0 0;"></div><div style="position:absolute;left:896.00px;top:81.00px;font-size:12px;line-height:12px;height:12px;color:#c2c4c4;white-space:nowrap;transform:translate(-50%,-50%) scaleX(0.99);transform-origin:center center;font-weight:normal;">MIDI MAP</div><div style="position:absolute;left:780.5px;top:110.2px;width:230.8px;height:261.6px;background:#3c4850;border-radius:0 0 5px 5px;"></div><div style="position:absolute;left:780.5px;top:161.7px;width:230.8px;height:1.7px;background:#1c282e;"></div><div style="position:absolute;left:780.5px;top:214.2px;width:230.8px;height:1.7px;background:#1c282e;"></div><div style="position:absolute;left:780.5px;top:266.8px;width:230.8px;height:1.7px;background:#1c282e;"></div><div style="position:absolute;left:780.5px;top:319.2px;width:230.8px;height:1.7px;background:#1c282e;"></div><div style="position:absolute;left:785.80px;top:136.10px;font-size:13px;line-height:13px;height:13px;color:#c9cbcb;white-space:nowrap;transform:translateY(-50%) scaleX(0.99);transform-origin:left center;font-weight:normal;">Parameter:</div><div style="position:absolute;left:785.80px;top:188.20px;font-size:13px;line-height:13px;height:13px;color:#c9cbcb;white-space:nowrap;transform:translateY(-50%) scaleX(0.99);transform-origin:left center;font-weight:normal;">Range:</div><div style="position:absolute;left:848.4px;top:173px;width:152.3px;height:31.6px;background:#0b1f27;border-radius:5px;"></div><div style="position:absolute;left:854.00px;top:188.70px;font-size:12px;line-height:12px;height:12px;color:#c7c9c9;white-space:nowrap;transform:translateY(-50%) scaleX(0.95);transform-origin:left center;font-weight:normal;">0.00</div><div style="position:absolute;left:995.50px;top:188.70px;font-size:12px;line-height:12px;height:12px;color:#c7c9c9;white-space:nowrap;transform:translate(-100%,-50%) scaleX(0.95);transform-origin:right center;font-weight:normal;">1.00</div><div style="position:absolute;left:783.80px;top:241.30px;font-size:10px;line-height:10px;height:10px;color:#c9cbcb;white-space:nowrap;transform:translateY(-50%) scaleX(0.92);transform-origin:left center;font-weight:normal;">MIDI Range:</div><div style="position:absolute;left:848.4px;top:225.7px;width:152.3px;height:31.2px;background:#2a3138;border:1px solid #1a2329;border-radius:5px;box-sizing:border-box;"></div><div style="position:absolute;left:854.00px;top:241.30px;font-size:12px;line-height:12px;height:12px;color:#c7c9c9;white-space:nowrap;transform:translateY(-50%) scaleX(0.95);transform-origin:left center;font-weight:normal;">0</div><div style="position:absolute;left:995.50px;top:241.30px;font-size:12px;line-height:12px;height:12px;color:#c7c9c9;white-space:nowrap;transform:translate(-100%,-50%) scaleX(0.95);transform-origin:right center;font-weight:normal;">127</div><div style="position:absolute;left:785.80px;top:292.70px;font-size:13px;line-height:13px;height:13px;color:#c9cbcb;white-space:nowrap;transform:translateY(-50%) scaleX(0.99);transform-origin:left center;font-weight:normal;">Flip</div><div style="position:absolute;left:965.20px;top:276.10px;width:36.00px;height:36.00px;background:transparent;border:1.3px solid #696d6f;border-radius:6px;box-sizing:border-box;"></div><div style="position:absolute;left:785.80px;top:346.30px;font-size:13px;line-height:13px;height:13px;color:#c9cbcb;white-space:nowrap;transform:translateY(-50%) scaleX(0.99);transform-origin:left center;font-weight:normal;">Control Type:</div><div style="position:absolute;left:778px;top:374px;width:236px;height:400px;background:#0b1f26;"></div><div style="position:absolute;left:780px;top:383.3px;width:232px;height:53.3px;background:#2b3239;border-radius:5px 5px 0 0;"></div><div style="position:absolute;left:896.00px;top:409.60px;font-size:12px;line-height:12px;height:12px;color:#c2c4c4;white-space:nowrap;transform:translate(-50%,-50%) scaleX(0.96);transform-origin:center center;font-weight:normal;">MIDI SETUP</div><div style="position:absolute;left:780px;top:438.3px;width:232px;height:324px;background:#3c4850;"></div><div style="position:absolute;left:784.60px;top:461.50px;font-size:12.3px;line-height:12.3px;height:12.3px;color:#c4c6c6;white-space:nowrap;transform:translateY(-50%) scaleX(0.88);transform-origin:left center;font-weight:normal;">GLOBAL</div><div style="position:absolute;left:1003.50px;top:462.80px;font-size:9px;line-height:9px;height:9px;color:#b0b2b2;white-space:nowrap;transform:translate(-50%,-50%) scaleX(1.0);transform-origin:center center;font-weight:normal;">..</div><div style="position:absolute;left:780px;top:483.26px;width:232px;height:1.8px;background:#1c282e;"></div><div style="position:absolute;left:784.60px;top:508.26px;font-size:12.3px;line-height:12.3px;height:12.3px;color:#c4c6c6;white-space:nowrap;transform:translateY(-50%) scaleX(0.88);transform-origin:left center;font-weight:normal;">EFFECT CHANNEL 1</div><div style="position:absolute;left:1003.50px;top:509.56px;font-size:9px;line-height:9px;height:9px;color:#b0b2b2;white-space:nowrap;transform:translate(-50%,-50%) scaleX(1.0);transform-origin:center center;font-weight:normal;">..</div><div style="position:absolute;left:780px;top:530.02px;width:232px;height:1.8px;background:#1c282e;"></div><div style="position:absolute;left:784.60px;top:555.02px;font-size:12.3px;line-height:12.3px;height:12.3px;color:#c4c6c6;white-space:nowrap;transform:translateY(-50%) scaleX(0.88);transform-origin:left center;font-weight:normal;">EFFECT CHANNEL 2</div><div style="position:absolute;left:1003.50px;top:556.32px;font-size:9px;line-height:9px;height:9px;color:#b0b2b2;white-space:nowrap;transform:translate(-50%,-50%) scaleX(1.0);transform-origin:center center;font-weight:normal;">..</div><div style="position:absolute;left:780px;top:576.78px;width:232px;height:1.8px;background:#1c282e;"></div><div style="position:absolute;left:784.60px;top:601.78px;font-size:12.3px;line-height:12.3px;height:12.3px;color:#c4c6c6;white-space:nowrap;transform:translateY(-50%) scaleX(0.88);transform-origin:left center;font-weight:normal;">DECK A</div><div style="position:absolute;left:1003.50px;top:603.08px;font-size:9px;line-height:9px;height:9px;color:#b0b2b2;white-space:nowrap;transform:translate(-50%,-50%) scaleX(1.0);transform-origin:center center;font-weight:normal;">..</div><div style="position:absolute;left:780px;top:623.54px;width:232px;height:1.8px;background:#1c282e;"></div><div style="position:absolute;left:784.60px;top:648.54px;font-size:12.3px;line-height:12.3px;height:12.3px;color:#c4c6c6;white-space:nowrap;transform:translateY(-50%) scaleX(0.88);transform-origin:left center;font-weight:normal;">DECK B</div><div style="position:absolute;left:1003.50px;top:649.84px;font-size:9px;line-height:9px;height:9px;color:#b0b2b2;white-space:nowrap;transform:translate(-50%,-50%) scaleX(1.0);transform-origin:center center;font-weight:normal;">..</div><div style="position:absolute;left:780px;top:670.30px;width:232px;height:1.8px;background:#1c282e;"></div><div style="position:absolute;left:784.60px;top:695.30px;font-size:12.3px;line-height:12.3px;height:12.3px;color:#c4c6c6;white-space:nowrap;transform:translateY(-50%) scaleX(0.88);transform-origin:left center;font-weight:normal;">DECK C</div><div style="position:absolute;left:1003.50px;top:696.60px;font-size:9px;line-height:9px;height:9px;color:#b0b2b2;white-space:nowrap;transform:translate(-50%,-50%) scaleX(1.0);transform-origin:center center;font-weight:normal;">..</div><div style="position:absolute;left:780px;top:717.06px;width:232px;height:1.8px;background:#1c282e;"></div><div style="position:absolute;left:784.60px;top:742.06px;font-size:12.3px;line-height:12.3px;height:12.3px;color:#c4c6c6;white-space:nowrap;transform:translateY(-50%) scaleX(0.88);transform-origin:left center;font-weight:normal;">DECK D</div><div style="position:absolute;left:1003.50px;top:743.36px;font-size:9px;line-height:9px;height:9px;color:#b0b2b2;white-space:nowrap;transform:translate(-50%,-50%) scaleX(1.0);transform-origin:center center;font-weight:normal;">..</div><div style="position:absolute;left:1014px;top:0;width:10px;height:768px;background:#1f262c;"></div>
<svg style="position:absolute;left:0;top:0" width="1024" height="768" viewBox="0 0 1024 768"><path d="M376.70 32.14 A14.60 14.60 0 1 1 391.30 32.14" stroke="#3b4045" stroke-width="5.0" fill="none" stroke-linecap="round"/><circle cx="371.10" cy="12.67" r="5.10" fill="#1f262c"/><circle cx="371.10" cy="12.67" r="3.90" fill="#d0d1d1"/><path d="M461.90 32.14 A14.60 14.60 0 1 1 476.50 32.14" stroke="#3b4045" stroke-width="5.0" fill="none" stroke-linecap="round"/><path d="M461.90 32.14 A14.60 14.60 0 1 1 476.50 32.14" stroke="#c6c7c7" stroke-width="5.0" fill="none" stroke-linecap="round"/><circle cx="476.50" cy="32.14" r="5.10" fill="#1f262c"/><circle cx="476.50" cy="32.14" r="3.90" fill="#d0d1d1"/><path d="M547.20 32.14 A14.60 14.60 0 1 1 561.80 32.14" stroke="#3b4045" stroke-width="5.0" fill="none" stroke-linecap="round"/><circle cx="554.50" cy="4.90" r="5.10" fill="#1f262c"/><circle cx="554.50" cy="4.90" r="3.90" fill="#d0d1d1"/><path d="M632.50 32.14 A14.60 14.60 0 1 1 647.10 32.14" stroke="#3b4045" stroke-width="5.0" fill="none" stroke-linecap="round"/><path d="M632.50 32.14 A14.60 14.60 0 1 1 652.81 12.87" stroke="#c6c7c7" stroke-width="5.0" fill="none" stroke-linecap="round"/><circle cx="652.81" cy="12.87" r="5.10" fill="#1f262c"/><circle cx="652.81" cy="12.87" r="3.90" fill="#d0d1d1"/><g fill="none" stroke="#d9924f" stroke-width="2.5"><path d="M168.05 234.20 V226.50 Q168.05 223.50 171.05 223.50 H184.65"/><path d="M188.15 226.50 V234.40 Q188.15 237.40 185.15 237.40 H171.55"/></g><path d="M183.35 219.30 L190.45 223.30 L183.35 227.30 Z" fill="#d9924f"/><path d="M172.85 233.40 L165.75 237.40 L172.85 241.40 Z" fill="#d9924f"/><g fill="none" stroke="#d9924f" stroke-width="2.5"><path d="M240.45 234.20 V226.50 Q240.45 223.50 243.45 223.50 H257.05"/><path d="M260.55 226.50 V234.40 Q260.55 237.40 257.55 237.40 H243.95"/></g><path d="M255.75 219.30 L262.85 223.30 L255.75 227.30 Z" fill="#d9924f"/><path d="M245.25 233.40 L238.15 237.40 L245.25 241.40 Z" fill="#d9924f"/><g fill="none" stroke="#cfd0be" stroke-width="2.5"><path d="M651.95 234.20 V226.50 Q651.95 223.50 654.95 223.50 H668.55"/><path d="M672.05 226.50 V234.40 Q672.05 237.40 669.05 237.40 H655.45"/></g><path d="M667.25 219.30 L674.35 223.30 L667.25 227.30 Z" fill="#cfd0be"/><path d="M656.75 233.40 L649.65 237.40 L656.75 241.40 Z" fill="#cfd0be"/><g fill="none" stroke="#cfd0be" stroke-width="2.5"><path d="M724.55 234.20 V226.50 Q724.55 223.50 727.55 223.50 H741.15"/><path d="M744.65 226.50 V234.40 Q744.65 237.40 741.65 237.40 H728.05"/></g><path d="M739.85 219.30 L746.95 223.30 L739.85 227.30 Z" fill="#cfd0be"/><path d="M729.35 233.40 L722.25 237.40 L729.35 241.40 Z" fill="#cfd0be"/><rect x="302.80" y="698.2" width="1.2" height="25.4" fill="#6a6d6f"/><rect x="302.80" y="733.4" width="1.2" height="25.4" fill="#6a6d6f"/><rect x="319.01" y="706" width="1.2" height="17.6" fill="#6a6d6f"/><rect x="319.01" y="733.4" width="1.2" height="17.6" fill="#6a6d6f"/><rect x="335.22" y="706" width="1.2" height="17.6" fill="#6a6d6f"/><rect x="335.22" y="733.4" width="1.2" height="17.6" fill="#6a6d6f"/><rect x="351.43" y="706" width="1.2" height="17.6" fill="#6a6d6f"/><rect x="351.43" y="733.4" width="1.2" height="17.6" fill="#6a6d6f"/><rect x="367.64" y="706" width="1.2" height="17.6" fill="#6a6d6f"/><rect x="367.64" y="733.4" width="1.2" height="17.6" fill="#6a6d6f"/><rect x="400.06" y="706" width="1.2" height="17.6" fill="#6a6d6f"/><rect x="400.06" y="733.4" width="1.2" height="17.6" fill="#6a6d6f"/><rect x="416.27" y="706" width="1.2" height="17.6" fill="#6a6d6f"/><rect x="416.27" y="733.4" width="1.2" height="17.6" fill="#6a6d6f"/><rect x="432.48" y="706" width="1.2" height="17.6" fill="#6a6d6f"/><rect x="432.48" y="733.4" width="1.2" height="17.6" fill="#6a6d6f"/><rect x="448.69" y="706" width="1.2" height="17.6" fill="#6a6d6f"/><rect x="448.69" y="733.4" width="1.2" height="17.6" fill="#6a6d6f"/><rect x="464.90" y="698.2" width="1.2" height="25.4" fill="#6a6d6f"/><rect x="464.90" y="733.4" width="1.2" height="25.4" fill="#6a6d6f"/><rect x="303" y="726.4" width="161.5" height="4.4" fill="#4b4f52"/><rect x="374" y="691" width="19.8" height="74" rx="2" fill="#3b4a53" fill-opacity="0.75"/><rect x="383.3" y="698.4" width="1.4" height="60" fill="#1a2328"/><path d="M167.25 434.69 A21.70 21.70 0 1 1 188.95 434.69" stroke="#3b4045" stroke-width="5.0" fill="none" stroke-linecap="round"/><circle cx="167.25" cy="434.69" r="5.30" fill="#1f262c"/><circle cx="167.25" cy="434.69" r="4.10" fill="#c98a4e"/><path d="M239.65 434.69 A21.70 21.70 0 1 1 261.35 434.69" stroke="#3b4045" stroke-width="5.0" fill="none" stroke-linecap="round"/><circle cx="239.65" cy="434.69" r="5.30" fill="#1f262c"/><circle cx="239.65" cy="434.69" r="4.10" fill="#c98a4e"/><path d="M96.65 511.41 A23.10 23.10 0 1 1 119.75 511.41" stroke="#3b4045" stroke-width="5.0" fill="none" stroke-linecap="round"/><circle cx="108.20" cy="468.30" r="5.30" fill="#1f262c"/><circle cx="108.20" cy="468.30" r="4.10" fill="#c98a4e"/><path d="M95.45 608.49 A29.20 29.20 0 1 1 124.65 608.49" stroke="#3b4045" stroke-width="5.5" fill="none" stroke-linecap="round"/><circle cx="110.05" cy="554.00" r="5.30" fill="#1f262c"/><circle cx="110.05" cy="554.00" r="4.10" fill="#c98a4e"/><path d="M165.30 608.49 A29.20 29.20 0 1 1 194.50 608.49" stroke="#3b4045" stroke-width="5.5" fill="none" stroke-linecap="round"/><circle cx="179.90" cy="554.00" r="5.30" fill="#1f262c"/><circle cx="179.90" cy="554.00" r="4.10" fill="#c98a4e"/><path d="M235.50 608.49 A29.20 29.20 0 1 1 264.70 608.49" stroke="#3b4045" stroke-width="5.5" fill="none" stroke-linecap="round"/><circle cx="250.10" cy="554.00" r="5.30" fill="#1f262c"/><circle cx="250.10" cy="554.00" r="4.10" fill="#c98a4e"/><rect x="93.95" y="646.9" width="9" height="23.9" fill="#6e5439"/><rect x="93.95" y="647.40" width="1" height="2.5" fill="#c98a4e"/><rect x="101.95" y="647.40" width="1" height="2.5" fill="#c98a4e"/><rect x="93.95" y="651.46" width="1" height="2.5" fill="#c98a4e"/><rect x="101.95" y="651.46" width="1" height="2.5" fill="#c98a4e"/><rect x="93.95" y="655.52" width="1" height="2.5" fill="#c98a4e"/><rect x="101.95" y="655.52" width="1" height="2.5" fill="#c98a4e"/><rect x="93.95" y="659.58" width="1" height="2.5" fill="#c98a4e"/><rect x="101.95" y="659.58" width="1" height="2.5" fill="#c98a4e"/><rect x="93.95" y="663.64" width="1" height="2.5" fill="#c98a4e"/><rect x="101.95" y="663.64" width="1" height="2.5" fill="#c98a4e"/><rect x="93.95" y="667.70" width="1" height="2.5" fill="#c98a4e"/><rect x="101.95" y="667.70" width="1" height="2.5" fill="#c98a4e"/><rect x="104.00" y="649.90" width="9" height="1.6" fill="#6e5439"/><rect x="104.00" y="653.96" width="9" height="1.6" fill="#6e5439"/><rect x="104.00" y="658.02" width="9" height="1.6" fill="#6e5439"/><rect x="104.00" y="662.08" width="9" height="1.6" fill="#6e5439"/><rect x="104.00" y="666.14" width="9" height="1.6" fill="#6e5439"/><rect x="104.00" y="647.40" width="9" height="2.5" fill="#c98a4e"/><rect x="104.00" y="651.46" width="9" height="2.5" fill="#c98a4e"/><rect x="104.00" y="655.52" width="9" height="2.5" fill="#c98a4e"/><rect x="104.00" y="659.58" width="9" height="2.5" fill="#c98a4e"/><rect x="104.00" y="663.64" width="9" height="2.5" fill="#c98a4e"/><rect x="104.00" y="667.70" width="9" height="2.5" fill="#c98a4e"/><rect x="114.05" y="649.90" width="9" height="1.6" fill="#6e5439"/><rect x="114.05" y="653.96" width="9" height="1.6" fill="#6e5439"/><rect x="114.05" y="658.02" width="9" height="1.6" fill="#6e5439"/><rect x="114.05" y="662.08" width="9" height="1.6" fill="#6e5439"/><rect x="114.05" y="666.14" width="9" height="1.6" fill="#6e5439"/><rect x="114.05" y="647.40" width="9" height="2.5" fill="#c98a4e"/><rect x="114.05" y="651.46" width="9" height="2.5" fill="#c98a4e"/><rect x="114.05" y="655.52" width="9" height="2.5" fill="#c98a4e"/><rect x="114.05" y="659.58" width="9" height="2.5" fill="#c98a4e"/><rect x="114.05" y="663.64" width="9" height="2.5" fill="#c98a4e"/><rect x="114.05" y="667.70" width="9" height="2.5" fill="#c98a4e"/><rect x="164.80" y="649.90" width="9" height="1.6" fill="#6e5439"/><rect x="164.80" y="653.96" width="9" height="1.6" fill="#6e5439"/><rect x="164.80" y="658.02" width="9" height="1.6" fill="#6e5439"/><rect x="164.80" y="662.08" width="9" height="1.6" fill="#6e5439"/><rect x="164.80" y="666.14" width="9" height="1.6" fill="#6e5439"/><rect x="164.80" y="647.40" width="9" height="2.5" fill="#c98a4e"/><rect x="164.80" y="651.46" width="9" height="2.5" fill="#c98a4e"/><rect x="164.80" y="655.52" width="9" height="2.5" fill="#c98a4e"/><rect x="164.80" y="659.58" width="9" height="2.5" fill="#c98a4e"/><rect x="164.80" y="663.64" width="9" height="2.5" fill="#c98a4e"/><rect x="164.80" y="667.70" width="9" height="2.5" fill="#c98a4e"/><rect x="174.85" y="646.9" width="9" height="23.9" fill="#6e5439"/><rect x="174.85" y="647.40" width="1" height="2.5" fill="#c98a4e"/><rect x="182.85" y="647.40" width="1" height="2.5" fill="#c98a4e"/><rect x="174.85" y="651.46" width="1" height="2.5" fill="#c98a4e"/><rect x="182.85" y="651.46" width="1" height="2.5" fill="#c98a4e"/><rect x="174.85" y="655.52" width="1" height="2.5" fill="#c98a4e"/><rect x="182.85" y="655.52" width="1" height="2.5" fill="#c98a4e"/><rect x="174.85" y="659.58" width="1" height="2.5" fill="#c98a4e"/><rect x="182.85" y="659.58" width="1" height="2.5" fill="#c98a4e"/><rect x="174.85" y="663.64" width="1" height="2.5" fill="#c98a4e"/><rect x="182.85" y="663.64" width="1" height="2.5" fill="#c98a4e"/><rect x="174.85" y="667.70" width="1" height="2.5" fill="#c98a4e"/><rect x="182.85" y="667.70" width="1" height="2.5" fill="#c98a4e"/><rect x="184.90" y="649.90" width="9" height="1.6" fill="#6e5439"/><rect x="184.90" y="653.96" width="9" height="1.6" fill="#6e5439"/><rect x="184.90" y="658.02" width="9" height="1.6" fill="#6e5439"/><rect x="184.90" y="662.08" width="9" height="1.6" fill="#6e5439"/><rect x="184.90" y="666.14" width="9" height="1.6" fill="#6e5439"/><rect x="184.90" y="647.40" width="9" height="2.5" fill="#c98a4e"/><rect x="184.90" y="651.46" width="9" height="2.5" fill="#c98a4e"/><rect x="184.90" y="655.52" width="9" height="2.5" fill="#c98a4e"/><rect x="184.90" y="659.58" width="9" height="2.5" fill="#c98a4e"/><rect x="184.90" y="663.64" width="9" height="2.5" fill="#c98a4e"/><rect x="184.90" y="667.70" width="9" height="2.5" fill="#c98a4e"/><rect x="236.00" y="649.90" width="9" height="1.6" fill="#6e5439"/><rect x="236.00" y="653.96" width="9" height="1.6" fill="#6e5439"/><rect x="236.00" y="658.02" width="9" height="1.6" fill="#6e5439"/><rect x="236.00" y="662.08" width="9" height="1.6" fill="#6e5439"/><rect x="236.00" y="666.14" width="9" height="1.6" fill="#6e5439"/><rect x="236.00" y="647.40" width="9" height="2.5" fill="#c98a4e"/><rect x="236.00" y="651.46" width="9" height="2.5" fill="#c98a4e"/><rect x="236.00" y="655.52" width="9" height="2.5" fill="#c98a4e"/><rect x="236.00" y="659.58" width="9" height="2.5" fill="#c98a4e"/><rect x="236.00" y="663.64" width="9" height="2.5" fill="#c98a4e"/><rect x="236.00" y="667.70" width="9" height="2.5" fill="#c98a4e"/><rect x="246.05" y="649.90" width="9" height="1.6" fill="#6e5439"/><rect x="246.05" y="653.96" width="9" height="1.6" fill="#6e5439"/><rect x="246.05" y="658.02" width="9" height="1.6" fill="#6e5439"/><rect x="246.05" y="662.08" width="9" height="1.6" fill="#6e5439"/><rect x="246.05" y="666.14" width="9" height="1.6" fill="#6e5439"/><rect x="246.05" y="647.40" width="9" height="2.5" fill="#c98a4e"/><rect x="246.05" y="651.46" width="9" height="2.5" fill="#c98a4e"/><rect x="246.05" y="655.52" width="9" height="2.5" fill="#c98a4e"/><rect x="246.05" y="659.58" width="9" height="2.5" fill="#c98a4e"/><rect x="246.05" y="663.64" width="9" height="2.5" fill="#c98a4e"/><rect x="246.05" y="667.70" width="9" height="2.5" fill="#c98a4e"/><rect x="256.10" y="646.9" width="9" height="23.9" fill="#6e5439"/><rect x="256.10" y="647.40" width="1" height="2.5" fill="#c98a4e"/><rect x="264.10" y="647.40" width="1" height="2.5" fill="#c98a4e"/><rect x="256.10" y="651.46" width="1" height="2.5" fill="#c98a4e"/><rect x="264.10" y="651.46" width="1" height="2.5" fill="#c98a4e"/><rect x="256.10" y="655.52" width="1" height="2.5" fill="#c98a4e"/><rect x="264.10" y="655.52" width="1" height="2.5" fill="#c98a4e"/><rect x="256.10" y="659.58" width="1" height="2.5" fill="#c98a4e"/><rect x="264.10" y="659.58" width="1" height="2.5" fill="#c98a4e"/><rect x="256.10" y="663.64" width="1" height="2.5" fill="#c98a4e"/><rect x="264.10" y="663.64" width="1" height="2.5" fill="#c98a4e"/><rect x="256.10" y="667.70" width="1" height="2.5" fill="#c98a4e"/><rect x="264.10" y="667.70" width="1" height="2.5" fill="#c98a4e"/><path d="M22.30 717 L22.30 739.3 L44.60 728.2 Z" fill="#c98a4e"/><path d="M93.90 733 V728.35 A11.65 11.65 0 0 1 117.20 728.35 V733" stroke="#c98a4e" stroke-width="2.3" fill="none"/><path d="M96.10 730.5 A3.3 4.75 0 0 0 96.10 740 Z" fill="#c98a4e"/><path d="M115.00 730.5 A3.3 4.75 0 0 1 115.00 740 Z" fill="#c98a4e"/><rect x="97.40" y="729.1" width="2.5" height="11.7" rx="1" fill="#c98a4e"/><rect x="111.20" y="729.1" width="2.5" height="11.7" rx="1" fill="#c98a4e"/><path d="M506.65 434.69 A21.70 21.70 0 1 1 528.35 434.69" stroke="#3b4045" stroke-width="5.0" fill="none" stroke-linecap="round"/><circle cx="506.65" cy="434.69" r="5.30" fill="#1f262c"/><circle cx="506.65" cy="434.69" r="4.10" fill="#bfc0ac"/><path d="M579.15 434.69 A21.70 21.70 0 1 1 600.85 434.69" stroke="#3b4045" stroke-width="5.0" fill="none" stroke-linecap="round"/><circle cx="579.15" cy="434.69" r="5.30" fill="#1f262c"/><circle cx="579.15" cy="434.69" r="4.10" fill="#bfc0ac"/><path d="M648.25 511.41 A23.10 23.10 0 1 1 671.35 511.41" stroke="#3b4045" stroke-width="5.0" fill="none" stroke-linecap="round"/><circle cx="659.80" cy="468.30" r="5.30" fill="#1f262c"/><circle cx="659.80" cy="468.30" r="4.10" fill="#bfc0ac"/><path d="M503.30 608.49 A29.20 29.20 0 1 1 532.50 608.49" stroke="#3b4045" stroke-width="5.5" fill="none" stroke-linecap="round"/><circle cx="517.90" cy="554.00" r="5.30" fill="#1f262c"/><circle cx="517.90" cy="554.00" r="4.10" fill="#bfc0ac"/><path d="M573.50 608.49 A29.20 29.20 0 1 1 602.70 608.49" stroke="#3b4045" stroke-width="5.5" fill="none" stroke-linecap="round"/><circle cx="588.10" cy="554.00" r="5.30" fill="#1f262c"/><circle cx="588.10" cy="554.00" r="4.10" fill="#bfc0ac"/><path d="M643.30 608.49 A29.20 29.20 0 1 1 672.50 608.49" stroke="#3b4045" stroke-width="5.5" fill="none" stroke-linecap="round"/><circle cx="657.90" cy="554.00" r="5.30" fill="#1f262c"/><circle cx="657.90" cy="554.00" r="4.10" fill="#bfc0ac"/><rect x="502.00" y="646.9" width="9" height="23.9" fill="#6a6d62"/><rect x="502.00" y="647.40" width="1" height="2.5" fill="#bfc0ac"/><rect x="510.00" y="647.40" width="1" height="2.5" fill="#bfc0ac"/><rect x="502.00" y="651.46" width="1" height="2.5" fill="#bfc0ac"/><rect x="510.00" y="651.46" width="1" height="2.5" fill="#bfc0ac"/><rect x="502.00" y="655.52" width="1" height="2.5" fill="#bfc0ac"/><rect x="510.00" y="655.52" width="1" height="2.5" fill="#bfc0ac"/><rect x="502.00" y="659.58" width="1" height="2.5" fill="#bfc0ac"/><rect x="510.00" y="659.58" width="1" height="2.5" fill="#bfc0ac"/><rect x="502.00" y="663.64" width="1" height="2.5" fill="#bfc0ac"/><rect x="510.00" y="663.64" width="1" height="2.5" fill="#bfc0ac"/><rect x="502.00" y="667.70" width="1" height="2.5" fill="#bfc0ac"/><rect x="510.00" y="667.70" width="1" height="2.5" fill="#bfc0ac"/><rect x="512.05" y="649.90" width="9" height="1.6" fill="#6a6d62"/><rect x="512.05" y="653.96" width="9" height="1.6" fill="#6a6d62"/><rect x="512.05" y="658.02" width="9" height="1.6" fill="#6a6d62"/><rect x="512.05" y="662.08" width="9" height="1.6" fill="#6a6d62"/><rect x="512.05" y="666.14" width="9" height="1.6" fill="#6a6d62"/><rect x="512.05" y="647.40" width="9" height="2.5" fill="#bfc0ac"/><rect x="512.05" y="651.46" width="9" height="2.5" fill="#bfc0ac"/><rect x="512.05" y="655.52" width="9" height="2.5" fill="#bfc0ac"/><rect x="512.05" y="659.58" width="9" height="2.5" fill="#bfc0ac"/><rect x="512.05" y="663.64" width="9" height="2.5" fill="#bfc0ac"/><rect x="512.05" y="667.70" width="9" height="2.5" fill="#bfc0ac"/><rect x="522.10" y="649.90" width="9" height="1.6" fill="#6a6d62"/><rect x="522.10" y="653.96" width="9" height="1.6" fill="#6a6d62"/><rect x="522.10" y="658.02" width="9" height="1.6" fill="#6a6d62"/><rect x="522.10" y="662.08" width="9" height="1.6" fill="#6a6d62"/><rect x="522.10" y="666.14" width="9" height="1.6" fill="#6a6d62"/><rect x="522.10" y="647.40" width="9" height="2.5" fill="#bfc0ac"/><rect x="522.10" y="651.46" width="9" height="2.5" fill="#bfc0ac"/><rect x="522.10" y="655.52" width="9" height="2.5" fill="#bfc0ac"/><rect x="522.10" y="659.58" width="9" height="2.5" fill="#bfc0ac"/><rect x="522.10" y="663.64" width="9" height="2.5" fill="#bfc0ac"/><rect x="522.10" y="667.70" width="9" height="2.5" fill="#bfc0ac"/><rect x="573.20" y="649.90" width="9" height="1.6" fill="#6a6d62"/><rect x="573.20" y="653.96" width="9" height="1.6" fill="#6a6d62"/><rect x="573.20" y="658.02" width="9" height="1.6" fill="#6a6d62"/><rect x="573.20" y="662.08" width="9" height="1.6" fill="#6a6d62"/><rect x="573.20" y="666.14" width="9" height="1.6" fill="#6a6d62"/><rect x="573.20" y="647.40" width="9" height="2.5" fill="#bfc0ac"/><rect x="573.20" y="651.46" width="9" height="2.5" fill="#bfc0ac"/><rect x="573.20" y="655.52" width="9" height="2.5" fill="#bfc0ac"/><rect x="573.20" y="659.58" width="9" height="2.5" fill="#bfc0ac"/><rect x="573.20" y="663.64" width="9" height="2.5" fill="#bfc0ac"/><rect x="573.20" y="667.70" width="9" height="2.5" fill="#bfc0ac"/><rect x="583.25" y="646.9" width="9" height="23.9" fill="#6a6d62"/><rect x="583.25" y="647.40" width="1" height="2.5" fill="#bfc0ac"/><rect x="591.25" y="647.40" width="1" height="2.5" fill="#bfc0ac"/><rect x="583.25" y="651.46" width="1" height="2.5" fill="#bfc0ac"/><rect x="591.25" y="651.46" width="1" height="2.5" fill="#bfc0ac"/><rect x="583.25" y="655.52" width="1" height="2.5" fill="#bfc0ac"/><rect x="591.25" y="655.52" width="1" height="2.5" fill="#bfc0ac"/><rect x="583.25" y="659.58" width="1" height="2.5" fill="#bfc0ac"/><rect x="591.25" y="659.58" width="1" height="2.5" fill="#bfc0ac"/><rect x="583.25" y="663.64" width="1" height="2.5" fill="#bfc0ac"/><rect x="591.25" y="663.64" width="1" height="2.5" fill="#bfc0ac"/><rect x="583.25" y="667.70" width="1" height="2.5" fill="#bfc0ac"/><rect x="591.25" y="667.70" width="1" height="2.5" fill="#bfc0ac"/><rect x="593.30" y="649.90" width="9" height="1.6" fill="#6a6d62"/><rect x="593.30" y="653.96" width="9" height="1.6" fill="#6a6d62"/><rect x="593.30" y="658.02" width="9" height="1.6" fill="#6a6d62"/><rect x="593.30" y="662.08" width="9" height="1.6" fill="#6a6d62"/><rect x="593.30" y="666.14" width="9" height="1.6" fill="#6a6d62"/><rect x="593.30" y="647.40" width="9" height="2.5" fill="#bfc0ac"/><rect x="593.30" y="651.46" width="9" height="2.5" fill="#bfc0ac"/><rect x="593.30" y="655.52" width="9" height="2.5" fill="#bfc0ac"/><rect x="593.30" y="659.58" width="9" height="2.5" fill="#bfc0ac"/><rect x="593.30" y="663.64" width="9" height="2.5" fill="#bfc0ac"/><rect x="593.30" y="667.70" width="9" height="2.5" fill="#bfc0ac"/><rect x="644.05" y="649.90" width="9" height="1.6" fill="#6a6d62"/><rect x="644.05" y="653.96" width="9" height="1.6" fill="#6a6d62"/><rect x="644.05" y="658.02" width="9" height="1.6" fill="#6a6d62"/><rect x="644.05" y="662.08" width="9" height="1.6" fill="#6a6d62"/><rect x="644.05" y="666.14" width="9" height="1.6" fill="#6a6d62"/><rect x="644.05" y="647.40" width="9" height="2.5" fill="#bfc0ac"/><rect x="644.05" y="651.46" width="9" height="2.5" fill="#bfc0ac"/><rect x="644.05" y="655.52" width="9" height="2.5" fill="#bfc0ac"/><rect x="644.05" y="659.58" width="9" height="2.5" fill="#bfc0ac"/><rect x="644.05" y="663.64" width="9" height="2.5" fill="#bfc0ac"/><rect x="644.05" y="667.70" width="9" height="2.5" fill="#bfc0ac"/><rect x="654.10" y="649.90" width="9" height="1.6" fill="#6a6d62"/><rect x="654.10" y="653.96" width="9" height="1.6" fill="#6a6d62"/><rect x="654.10" y="658.02" width="9" height="1.6" fill="#6a6d62"/><rect x="654.10" y="662.08" width="9" height="1.6" fill="#6a6d62"/><rect x="654.10" y="666.14" width="9" height="1.6" fill="#6a6d62"/><rect x="654.10" y="647.40" width="9" height="2.5" fill="#bfc0ac"/><rect x="654.10" y="651.46" width="9" height="2.5" fill="#bfc0ac"/><rect x="654.10" y="655.52" width="9" height="2.5" fill="#bfc0ac"/><rect x="654.10" y="659.58" width="9" height="2.5" fill="#bfc0ac"/><rect x="654.10" y="663.64" width="9" height="2.5" fill="#bfc0ac"/><rect x="654.10" y="667.70" width="9" height="2.5" fill="#bfc0ac"/><rect x="664.15" y="646.9" width="9" height="23.9" fill="#6a6d62"/><rect x="664.15" y="647.40" width="1" height="2.5" fill="#bfc0ac"/><rect x="672.15" y="647.40" width="1" height="2.5" fill="#bfc0ac"/><rect x="664.15" y="651.46" width="1" height="2.5" fill="#bfc0ac"/><rect x="672.15" y="651.46" width="1" height="2.5" fill="#bfc0ac"/><rect x="664.15" y="655.52" width="1" height="2.5" fill="#bfc0ac"/><rect x="672.15" y="655.52" width="1" height="2.5" fill="#bfc0ac"/><rect x="664.15" y="659.58" width="1" height="2.5" fill="#bfc0ac"/><rect x="672.15" y="659.58" width="1" height="2.5" fill="#bfc0ac"/><rect x="664.15" y="663.64" width="1" height="2.5" fill="#bfc0ac"/><rect x="672.15" y="663.64" width="1" height="2.5" fill="#bfc0ac"/><rect x="664.15" y="667.70" width="1" height="2.5" fill="#bfc0ac"/><rect x="672.15" y="667.70" width="1" height="2.5" fill="#bfc0ac"/><path d="M649.85 733 V728.35 A11.65 11.65 0 0 1 673.15 728.35 V733" stroke="#bfc0ac" stroke-width="2.3" fill="none"/><path d="M652.05 730.5 A3.3 4.75 0 0 0 652.05 740 Z" fill="#bfc0ac"/><path d="M670.95 730.5 A3.3 4.75 0 0 1 670.95 740 Z" fill="#bfc0ac"/><rect x="653.35" y="729.1" width="2.5" height="11.7" rx="1" fill="#bfc0ac"/><rect x="667.15" y="729.1" width="2.5" height="11.7" rx="1" fill="#bfc0ac"/><path d="M722.95 717 L722.95 739.3 L745.25 728.2 Z" fill="#bfc0ac"/><g fill="none" stroke="#cfd0d0" stroke-width="2.5" stroke-linecap="butt" stroke-linejoin="miter"><path d="M802.6 81.9 H799.6 V89.6 H817.3 V81.9 H814.4"/><path d="M808.4 73 V83.1"/><path d="M804.2 77.2 L808.4 73 L812.6 77.2"/><path d="M977.2 81.9 H974.2 V89.6 H991.9 V81.9 H989"/><path d="M982.9 71.9 V81.5"/><path d="M978.7 77.6 L982.9 81.8 L987.1 77.6"/></g><g fill="#74787a"><rect x="978.3" y="124.6" width="19.3" height="4.2"/><path d="M979.3 130.1 H996.8 V147 Q996.8 148.6 995.2 148.6 H980.9 Q979.3 148.6 979.3 147 Z"/></g><path d="M985 125 V123.6 Q985 122.6 986 122.6 H990 Q991 122.6 991 123.6 V125" stroke="#74787a" stroke-width="1.7" fill="none"/><g fill="#3c4850"><rect x="981.7" y="131.9" width="2.4" height="14.9"/><rect x="986.8" y="131.9" width="2.4" height="14.9"/><rect x="991.9" y="131.9" width="2.4" height="14.9"/></g><path d="M889 749.5 L896 755.5 L903 749.5" stroke="#9aa0a2" stroke-width="1.3" fill="none"/></svg>
<div style="position:absolute;left:2px;top:2px;width:1020px;height:764px;border:4px solid rgba(113,113,113,0.88);border-radius:6px;box-sizing:border-box;"></div>
</body></html>
